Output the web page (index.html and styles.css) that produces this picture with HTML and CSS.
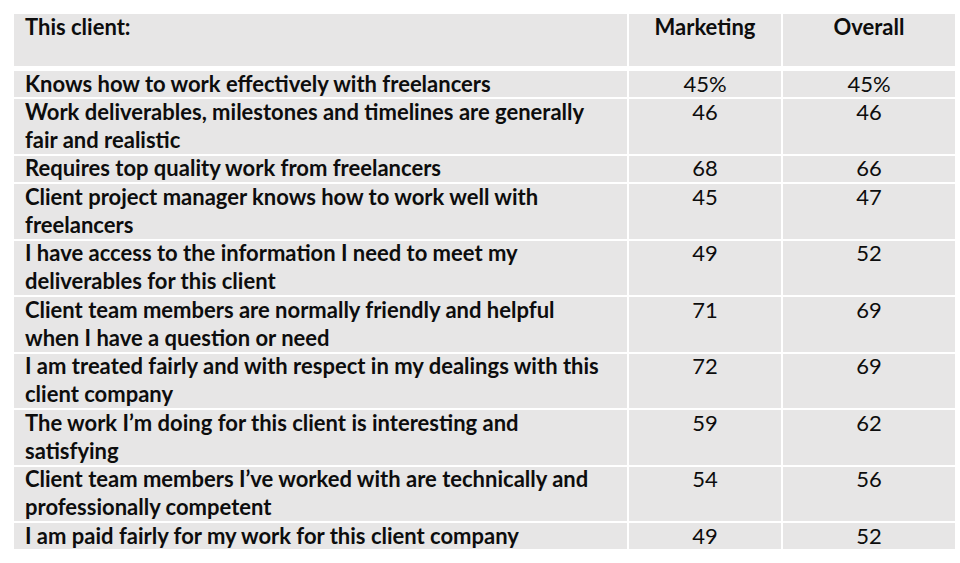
FILE: index.html
```html
<!DOCTYPE html>
<html>
<head>
<meta charset="utf-8">
<link rel="stylesheet" href="styles.css">
</head>
<body>
<div class="table">
  <div class="cell head label"><div class="txt">This client:</div></div>
  <div class="cell head num"><div class="txt">Marketing</div></div>
  <div class="cell head num"><div class="txt">Overall</div></div>

  <div class="cell label r1"><div class="txt">Knows how to work effectively with freelancers</div></div>
  <div class="cell num r1"><div class="txt">45%</div></div>
  <div class="cell num r1"><div class="txt">45%</div></div>

  <div class="cell label r2"><div class="txt">Work deliverables, milestones and timelines are generally<br>fair and realistic</div></div>
  <div class="cell num r2"><div class="txt">46</div></div>
  <div class="cell num r2"><div class="txt">46</div></div>

  <div class="cell label r1"><div class="txt">Requires top quality work from freelancers</div></div>
  <div class="cell num r1"><div class="txt">68</div></div>
  <div class="cell num r1"><div class="txt">66</div></div>

  <div class="cell label r2"><div class="txt">Client project manager knows how to work well with<br>freelancers</div></div>
  <div class="cell num r2"><div class="txt">45</div></div>
  <div class="cell num r2"><div class="txt">47</div></div>

  <div class="cell label r2"><div class="txt">I have access to the information I need to meet my<br>deliverables for this client</div></div>
  <div class="cell num r2"><div class="txt">49</div></div>
  <div class="cell num r2"><div class="txt">52</div></div>

  <div class="cell label r2"><div class="txt">Client team members are normally friendly and helpful<br>when I have a question or need</div></div>
  <div class="cell num r2"><div class="txt">71</div></div>
  <div class="cell num r2"><div class="txt">69</div></div>

  <div class="cell label r2"><div class="txt">I am treated fairly and with respect in my dealings with this<br>client company</div></div>
  <div class="cell num r2"><div class="txt">72</div></div>
  <div class="cell num r2"><div class="txt">69</div></div>

  <div class="cell label r2"><div class="txt">The work I’m doing for this client is interesting and<br>satisfying</div></div>
  <div class="cell num r2"><div class="txt">59</div></div>
  <div class="cell num r2"><div class="txt">62</div></div>

  <div class="cell label r2"><div class="txt">Client team members I’ve worked with are technically and<br>professionally competent</div></div>
  <div class="cell num r2"><div class="txt">54</div></div>
  <div class="cell num r2"><div class="txt">56</div></div>

  <div class="cell label r1"><div class="txt">I am paid fairly for my work for this client company</div></div>
  <div class="cell num r1"><div class="txt">49</div></div>
  <div class="cell num r1"><div class="txt">52</div></div>
</div>
</body>
</html>
```
FILE: styles.css
```css
html, body {
  margin: 0;
  padding: 0;
  background: #ffffff;
}
body {
  padding: 14px 0 0 14px;
  font-family: Lato, "Liberation Sans", sans-serif;
  font-size: 22px;
  color: #0d0d0d;
}
.table {
  display: grid;
  grid-template-columns: 613px 152px 172px;
  column-gap: 2px;
  row-gap: 2px;
  width: 941px;
}
.cell {
  background: #e7e6e6;
  line-height: 28.25px;
  white-space: nowrap;
  overflow: visible;
}
.txt {
  margin-top: -1.5px;
}
.label {
  padding-left: 11px;
  font-weight: 700;
}
.num {
  text-align: center;
  font-weight: 400;
}
.head {
  height: 52px;
  margin-bottom: 3px;
  font-weight: 700;
}
.r1 {
  height: 26.25px;
}
.r2 {
  height: 54.5px;
}
```
